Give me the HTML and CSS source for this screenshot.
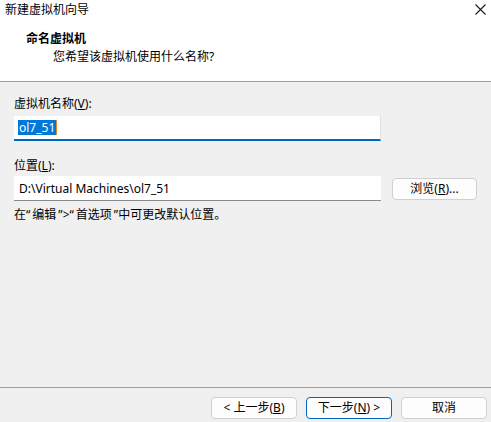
FILE: index.html
```html
<!DOCTYPE html>
<html lang="zh-CN">
<head>
<meta charset="utf-8">
<title>新建虚拟机向导</title>
<link rel="stylesheet" href="styles.css">
</head>
<body>
<div class="window">
  <div class="header">
    <div class="titlebar">
      <span class="title">新建虚拟机向导</span>
      <svg class="close" width="11" height="11" viewBox="0 0 11 11"><path d="M0.5 0.5 L10.5 10.5 M10.5 0.5 L0.5 10.5" stroke="#1a1a1a" stroke-width="1.1" fill="none"/></svg>
    </div>
    <div class="heading">命名虚拟机</div>
    <div class="subheading">您希望该虚拟机使用什么名称?</div>
  </div>
  <div class="content">
    <div class="label">虚拟机名称(<u>V</u>):</div>
    <div class="field focused"><span class="sel">ol7_51</span><span class="caret"></span></div>
    <div class="label label-loc">位置(<u>L</u>):</div>
    <div class="row">
      <div class="field plain">D:\Virtual Machines\ol7_51</div>
      <div class="btn browse">浏览(<u>R</u>)...</div>
    </div>
    <div class="hint">在<span class="q ql">“</span>编辑<span class="q qr">”</span>&gt;<span class="q ql">“</span>首选项<span class="q qr">”</span>中可更改默认位置。</div>
  </div>
  <div class="footer">
    <div class="btn">&lt; 上一步(<u>B</u>)</div>
    <div class="btn primary">下一步(<u>N</u>) &gt;</div>
    <div class="btn">取消</div>
  </div>
</div>
</body>
</html>
```
FILE: styles.css
```css
html, body {
  margin: 0;
  padding: 0;
}
body {
  font-family: "Noto Sans", "Noto Sans CJK SC", sans-serif;
  font-size: 12px;
  color: #000;
  background: #f0f0f0;
}
.window {
  width: 491px;
  height: 422px;
  display: flex;
  flex-direction: column;
  background: #f0f0f0;
}
u { text-decoration: underline; text-underline-offset: 1px; }
.header {
  height: 81px;
  background: #fff;
  border-bottom: 1px solid #a0a0a0;
  box-sizing: content-box;
}
.titlebar {
  height: 20px;
  display: flex;
  align-items: center;
  justify-content: space-between;
  padding: 0 5px 0 5px;
  line-height: 20px;
}
.close { margin-top: -1px; }
.heading {
  margin-top: 11px;
  padding-left: 26px;
  font-weight: bold;
  line-height: 16px;
}
.subheading {
  margin-top: 2px;
  padding-left: 53px;
  line-height: 16px;
}
.content {
  flex: 1;
  padding: 14px 0 0 14px;
}
.label { line-height: 16px; }
.field {
  box-sizing: border-box;
  width: 367px;
  height: 25px;
  background: #fff;
  display: flex;
  align-items: center;
}
.focused {
  margin-top: 4px;
  border-right: 1px solid #e0e0e0;
  border-bottom: 2px solid #0067c0;
  padding-left: 4px;
}
.sel {
  background: #0078d7;
  color: #fff;
  line-height: 15px;
  padding: 0 1px;
}
.caret {
  width: 1px;
  height: 15px;
  background: #e08a2a;
}
.label-loc { margin-top: 17px; }
.row {
  margin-top: 2px;
  display: flex;
  align-items: center;
  gap: 11px;
}
.plain {
  border-bottom: 1px solid #8a8a8a;
  padding-left: 5px;
}
.btn {
  box-sizing: border-box;
  width: 85px;
  height: 22px;
  border: 1px solid #d0d0d0;
  border-radius: 4px;
  background: #fdfdfd;
  display: flex;
  align-items: center;
  justify-content: center;
  line-height: 16px;
}
.browse { width: 85px; }
.hint {
  margin-top: 6px;
  line-height: 16px;
}
.q { display: inline-block; }
.ql { padding-right: 2px; }
.qr { padding-left: 2px; }
.footer {
  height: 35px;
  border-top: 1px solid #a0a0a0;
  display: flex;
  justify-content: flex-end;
  align-items: flex-start;
  gap: 9px;
  padding: 9px 4px 0 0;
  box-sizing: border-box;
}
.footer .btn { width: 86px; }
.primary { border-color: #0067c0; }
```
